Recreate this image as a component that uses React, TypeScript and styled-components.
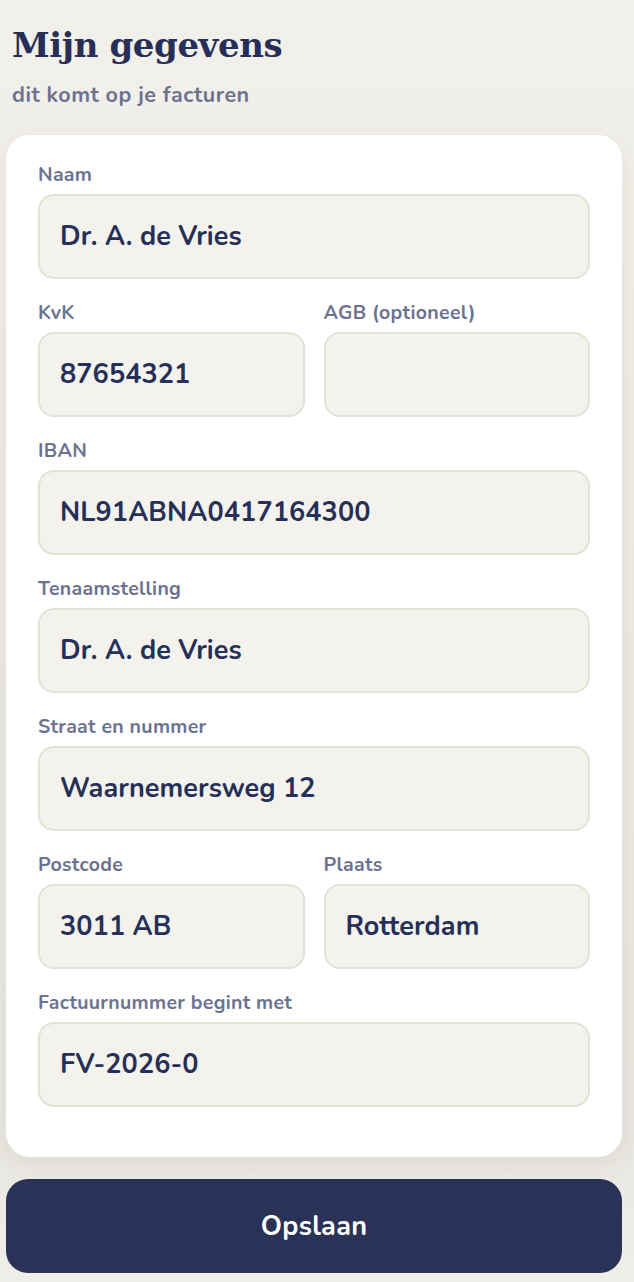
import React from "react";
import styled, { createGlobalStyle } from "styled-components";

const Global = createGlobalStyle`
  html, body { margin: 0; padding: 0; }
  body {
    background: linear-gradient(180deg, #f2f0ea 0%, #ebe9e3 55%, #e8e6e0 88%, #f0eee8 100%);
    font-family: "Nunito", Lato, "Noto Sans", sans-serif;
    -webkit-font-smoothing: antialiased;
  }
  * { box-sizing: border-box; }
`;

const Page = styled.div`
  padding: 22px 12px 10px 6px;
  min-height: 1282px;
  display: flex;
  flex-direction: column;
`;

const Header = styled.header`
  padding: 0 0 0 6px;
  display: flex;
  flex-direction: column;
  gap: 14px;
`;

const Title = styled.h1`
  margin: 0;
  font-family: "DejaVu Serif", "Liberation Serif", serif;
  font-weight: 700;
  font-size: 34px;
  line-height: 46px;
  letter-spacing: -0.4px;
  color: #262f57;
`;

const Subtitle = styled.p`
  margin: 0;
  font-size: 21.5px;
  font-weight: 700;
  color: #6b7390;
  line-height: 26px;
  letter-spacing: 0.5px;
`;

const Card = styled.section`
  margin-top: 27px;
  background: #ffffff;
  border-radius: 24px;
  padding: 30px 32px 50px;
  box-shadow: 0 6px 24px rgba(80, 70, 40, 0.08);
  display: flex;
  flex-direction: column;
  gap: 24px;
`;

const Row = styled.div`
  display: grid;
  grid-template-columns: 1fr 1fr;
  gap: 19px;
`;

const Field = styled.label`
  display: flex;
  flex-direction: column;
  gap: 9px;
`;

const Label = styled.span`
  font-size: 19.5px;
  font-weight: 700;
  color: #6b7390;
  line-height: 20px;
  letter-spacing: 0.3px;
`;

const Input = styled.input`
  height: 85px;
  width: 100%;
  border: 2px solid #e4e1d5;
  border-radius: 16px;
  background: #f3f2ed;
  padding: 0 20px;
  font-family: inherit;
  font-size: 27px;
  font-weight: 700;
  letter-spacing: 0.1px;
  color: #262f57;
  outline: none;
`;

const SaveButton = styled.button`
  margin-top: 22px;
  height: 94px;
  border: none;
  border-radius: 22px;
  background: #2a3357;
  color: #ffffff;
  font-family: inherit;
  font-size: 27px;
  font-weight: 700;
  letter-spacing: 0.3px;
  cursor: pointer;
`;

const F = ({ label, value }: { label: string; value: string }) => (
  <Field>
    <Label>{label}</Label>
    <Input defaultValue={value} />
  </Field>
);

export default function App() {
  return (
    <>
      <Global />
      <Page>
        <Header>
          <Title>Mijn gegevens</Title>
          <Subtitle>dit komt op je facturen</Subtitle>
        </Header>
        <Card>
          <F label="Naam" value="Dr. A. de Vries" />
          <Row>
            <F label="KvK" value="87654321" />
            <F label="AGB (optioneel)" value="" />
          </Row>
          <F label="IBAN" value="NL91ABNA0417164300" />
          <F label="Tenaamstelling" value="Dr. A. de Vries" />
          <F label="Straat en nummer" value="Waarnemersweg 12" />
          <Row>
            <F label="Postcode" value="3011 AB" />
            <F label="Plaats" value="Rotterdam" />
          </Row>
          <F label="Factuurnummer begint met" value="FV-2026-0" />
        </Card>
        <SaveButton>Opslaan</SaveButton>
      </Page>
    </>
  );
}
